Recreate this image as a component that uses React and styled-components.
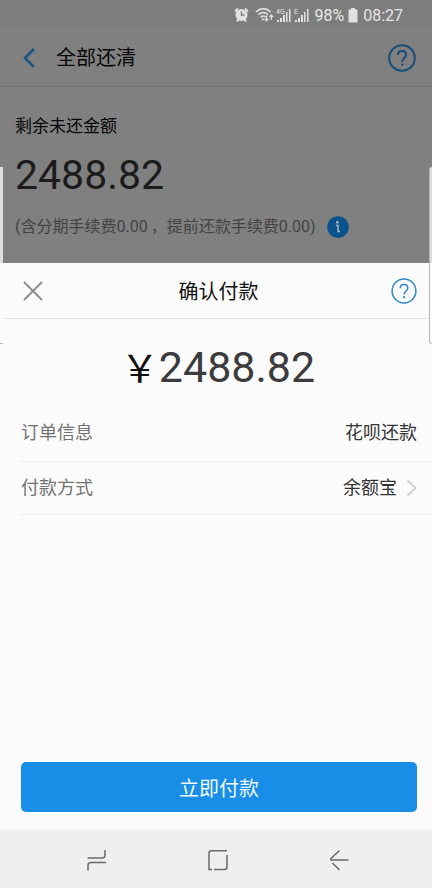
import React from 'react';
import styled, { createGlobalStyle } from 'styled-components'

const GlobalStyle = createGlobalStyle`
  * {
    box-sizing: border-box;
  }
  body {
    margin: 0;
    background: #808080;
    font-family: Roboto, "Noto Sans CJK SC", sans-serif;
  }
  button {
    padding: 0;
    border: 0;
    background: none;
    font-family: inherit;
    cursor: pointer;
  }
  svg {
    display: block;
  }
`

const Screen = styled.div`
  display: flex;
  flex-direction: column;
  min-height: 100vh;
  position: relative;
`

const StatusBar = styled.div`
  display: flex;
  align-items: center;
  justify-content: flex-end;
  height: 28px;
  padding: 2px 29px 0 0;
  background: #7d7d7d;
  color: #e6e6e6;
  font-size: 16px;
`

const StatusText = styled.span`
  margin-left: ${props => props.$gap}px;
`

const PageHeader = styled.header`
  display: flex;
  align-items: center;
  height: 59px;
  padding: 2px 16px 0 21px;
  border-bottom: 1px solid #707070;
`

const PageTitle = styled.h1`
  flex: 1;
  margin: 0 0 0 19px;
  font-size: 20px;
  line-height: 28px;
  font-weight: 400;
  color: #080808;
`

const IconButton = styled.button`
  display: flex;
  color: ${props => props.$color};
`

const Summary = styled.section`
  padding: 27px 15px 24px;
`

const SummaryLabel = styled.div`
  font-size: 17px;
  line-height: 24px;
  color: #080808;
`

const SummaryAmount = styled.div`
  margin-top: 11px;
  font-size: 41px;
  line-height: 52px;
  color: #1c1c1c;
`

const SummaryNote = styled.div`
  display: flex;
  align-items: center;
  gap: 12px;
  margin-top: 14px;
  font-size: 16px;
  line-height: 24px;
  color: #444;
`

const Comma = styled.span`
  margin-left: 3px;
`

const Sheet = styled.section`
  flex: 1;
  display: flex;
  flex-direction: column;
  background: #fbfbfb;
`

const SheetHeader = styled.header`
  display: grid;
  grid-template-columns: 26px 1fr 26px;
  align-items: center;
  height: 56px;
  padding: 0 15px 0 20px;
  border-bottom: 1px solid #e8e8e8;
`

const SheetTitle = styled.h2`
  margin: 0;
  padding-top: 2px;
  font-size: 20px;
  line-height: 28px;
  font-weight: 400;
  text-align: center;
  color: #111;
`

const PayAmount = styled.div`
  display: flex;
  align-items: baseline;
  justify-content: center;
  padding: 21px 0 11px 4px;
  font-size: 43px;
  line-height: 52px;
  color: #3c3c3e;
`

const Currency = styled.span`
  font-family: "Noto Sans CJK SC", sans-serif;
  font-size: 38px;
  color: #111;
`

const DetailList = styled.dl`
  margin: 0 0 0 21px;
`

const DetailRow = styled.div`
  display: flex;
  align-items: center;
  justify-content: space-between;
  height: ${props => props.$height}px;
  padding-right: 15px;
  border-bottom: 1px solid #ececec;
  font-size: 18px;
  line-height: 26px;
`

const DetailLabel = styled.dt`
  color: #737373;
`

const DetailValue = styled.dd`
  margin: 0;
  color: #333;
`

const MethodButton = styled.button`
  display: flex;
  align-items: center;
  gap: 9px;
  font-size: 18px;
  line-height: 26px;
  color: #333;
`

const PayButton = styled.button`
  height: 50px;
  margin: auto 15px 18px 21px;
  border-radius: 5px;
  && {
    background: #198ee7;
  }
  font-size: 20px;
  color: #f0f9ff;
`

const NavBar = styled.nav`
  display: flex;
  align-items: center;
  justify-content: center;
  gap: 97px;
  height: 58px;
  padding: 2px 0 0 4px;
  background: #efefef;
`

// edge panel handles, they float over both page and sheet
const EdgeHandle = styled.div`
  position: absolute;
  top: 167px;
  ${props => props.$side}: 0;
  width: 3px;
  height: 177px;
  background: linear-gradient(#dedede 96px, #fcfcfc 96px);
  border-bottom: 1px solid #bbb;
  border-left: ${props => props.$side === 'right' ? '1px solid #b4b4b4' : '0'};
  border-radius: ${props => props.$side === 'right' ? '3px 0 0 3px' : '0'};
`

const HelpIcon = ({ size, stroke }) => (
  <svg width={size} height={size} viewBox="0 0 28 28" fill="none" stroke="currentColor" strokeWidth={stroke}>
    <circle cx="14" cy="14" r="12.8" />
    <path d="M10 11c0-2.5 1.8-4 4.1-4s4 1.5 4 3.8c0 3.1-3.9 3.4-3.9 6.9" />
    <circle cx="14.2" cy="20.6" r="1.2" fill="currentColor" stroke="none" />
  </svg>
)

const BackIcon = () => (
  <svg width="16" height="20" viewBox="0 0 16 20" fill="none" stroke="currentColor" strokeWidth="2.6">
    <path d="M13 1L4 10l9 9" />
  </svg>
)

const CloseIcon = () => (
  <svg width="26" height="26" viewBox="0 0 26 26" fill="none" stroke="currentColor" strokeWidth="1.8">
    <path d="M4 4l18 18M22 4L4 22" />
  </svg>
)

const InfoIcon = () => (
  <svg width="22" height="22" viewBox="0 0 22 22">
    <circle cx="11" cy="11" r="10.8" fill="#0b518b" />
    <circle cx="10.4" cy="6.4" r="1.4" fill="#a9b4bd" />
    <path d="M8.8 9.6h2.3v6h2" fill="none" stroke="#a9b4bd" strokeWidth="1.5" />
  </svg>
)

const ChevronIcon = () => (
  <svg width="11" height="18" viewBox="0 0 11 18" fill="none" stroke="#c4c4c4" strokeWidth="1.7">
    <path d="M1.5 1.5L9.5 9l-8 7.5" />
  </svg>
)

const StatusIcons = () => (
  <svg width="76" height="20" viewBox="234 5 76 20" fill="#e2e2e2">
    <circle cx="241.5" cy="15" r="6" />
    <path d="M235 11.5l3-3M248 11.5l-3-3M237 21.5l1.5-2M246 21.5l-1.5-2" stroke="#e2e2e2" strokeWidth="2" />
    <path d="M241.5 11.2V15h3" stroke="#7d7d7d" strokeWidth="1.4" fill="none" />
    <g fill="none" stroke="#e2e2e2" strokeWidth="1.5">
      <path d="M256 12c4-4.3 10.5-4.3 14.5 0" />
      <path d="M258.3 14.7c2.8-3 7-3 9.8 0" />
      <path d="M260.6 17.2c1.6-1.6 3.5-1.6 5 0" />
    </g>
    <path d="M261.5 18.5h3l-1.5 2.5z" />
    <path d="M266.5 15.5v5M264.8 18.8l1.7 2 1.7-2M271.3 20v-5M269.6 17l1.7-2 1.7 2" fill="none" stroke="#e2e2e2" strokeWidth="1.2" />
    <text x="276" y="14" fontSize="7">4G</text>
    <path d="M277 20h2v2h-2zM280 18h2v4h-2zM283 15h2v7h-2zM286 12h1.5v10h-1.5zM289 9h1.5v13h-1.5z" />
    <text x="294" y="14" fontSize="7">E</text>
    <path d="M295 20h2v2h-2zM298 18h2v4h-2zM301 15h2v7h-2zM304 12h1.5v10h-1.5zM307 9h1.5v13h-1.5z" />
  </svg>
)

const BatteryIcon = () => (
  <svg width="10" height="16" viewBox="0 0 10 16" fill="#e2e2e2">
    <path d="M3 1h4v1.5h2.5v13h-9v-13H3z" />
  </svg>
)

const RecentsIcon = () => (
  <svg width="24" height="24" viewBox="0 0 24 24" fill="none" stroke="#6a6a6a" strokeWidth="1.5">
    <path d="M2.5 10H17q3 0 3-3V2M21 14.5H6q-3 0-3 3v5" />
  </svg>
)

const HomeIcon = () => (
  <svg width="24" height="24" viewBox="0 0 24 24" fill="none" stroke="#6a6a6a" strokeWidth="1.5">
    <path d="M21 2.8H5.5Q3 2.8 3 5.3v16.2h3M8 21.5h10.5q2.5 0 2.5-2.5V7" />
  </svg>
)

const NavBackIcon = () => (
  <svg width="24" height="24" viewBox="0 0 24 24" fill="none" stroke="#6a6a6a" strokeWidth="1.5">
    <path d="M12.5 2.5L4 10.5q-1 1.5.5 1.5h17M5.5 15l7 7" />
  </svg>
)

const AMOUNT = '2488.82'

function App() {
  return (
    <>
      <GlobalStyle />
      <Screen>
        <StatusBar>
          <StatusIcons />
          <StatusText $gap={4}>98%</StatusText>
          <StatusText $gap={4}><BatteryIcon /></StatusText>
          <StatusText $gap={5}>08:27</StatusText>
        </StatusBar>
        <PageHeader>
          <IconButton $color="#1a5481" aria-label="返回"><BackIcon /></IconButton>
          <PageTitle>全部还清</PageTitle>
          <IconButton $color="#164c78" aria-label="帮助"><HelpIcon size={28} stroke={2} /></IconButton>
        </PageHeader>
        <Summary>
          <SummaryLabel>剩余未还金额</SummaryLabel>
          <SummaryAmount>{AMOUNT}</SummaryAmount>
          <SummaryNote>
            <span>(含分期手续费0.00<Comma>，</Comma>提前还款手续费0.00)</span>
            <IconButton aria-label="说明"><InfoIcon /></IconButton>
          </SummaryNote>
        </Summary>
        <Sheet>
          <SheetHeader>
            <IconButton $color="#8c8c8c" aria-label="关闭"><CloseIcon /></IconButton>
            <SheetTitle>确认付款</SheetTitle>
            <IconButton $color="#2d86c6" aria-label="付款帮助"><HelpIcon size={26} stroke={1.6} /></IconButton>
          </SheetHeader>
          <PayAmount><Currency>￥</Currency>{AMOUNT}</PayAmount>
          <DetailList>
            <DetailRow $height={58}>
              <DetailLabel>订单信息</DetailLabel>
              <DetailValue>花呗还款</DetailValue>
            </DetailRow>
            <DetailRow $height={53}>
              <DetailLabel>付款方式</DetailLabel>
              <DetailValue>
                <MethodButton>余额宝<ChevronIcon /></MethodButton>
              </DetailValue>
            </DetailRow>
          </DetailList>
          <PayButton>立即付款</PayButton>
        </Sheet>
        <NavBar>
          <IconButton aria-label="最近任务"><RecentsIcon /></IconButton>
          <IconButton aria-label="主屏幕"><HomeIcon /></IconButton>
          <IconButton aria-label="后退"><NavBackIcon /></IconButton>
        </NavBar>
        <EdgeHandle $side="left" />
        <EdgeHandle $side="right" />
      </Screen>
    </>
  );
}

export default App;
